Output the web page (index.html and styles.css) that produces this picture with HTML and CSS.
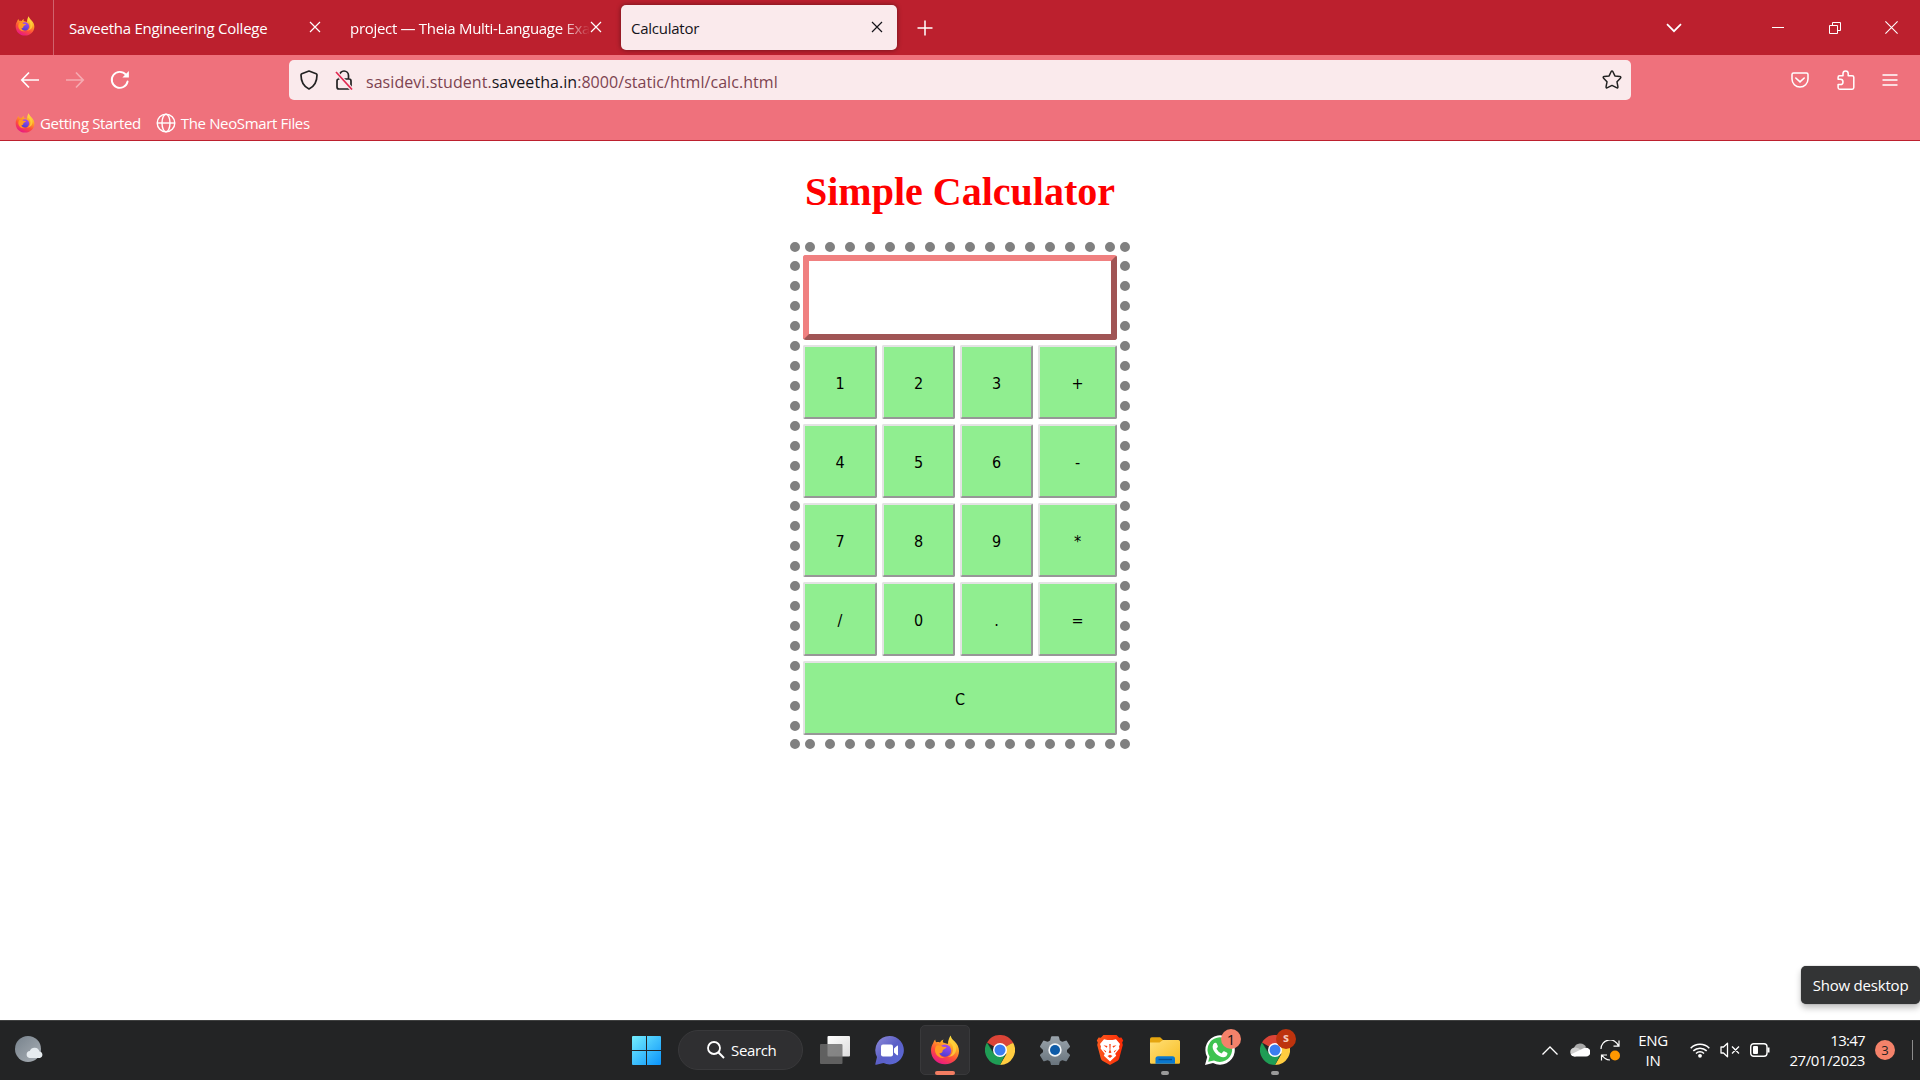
FILE: index.html
```html
<!DOCTYPE html>
<html lang="en">
<head>
<meta charset="utf-8">
<title>Calculator</title>
<link rel="stylesheet" href="styles.css">
</head>
<body>
<svg class="defs" width="0" height="0">
  <defs>
    <linearGradient id="ffBody" x1=".8" y1="0" x2=".3" y2="1"><stop offset="0" stop-color="#fff44f"/><stop offset=".35" stop-color="#ffa824"/><stop offset=".65" stop-color="#ff5038"/><stop offset="1" stop-color="#e6158a"/></linearGradient>
    <linearGradient id="ffGlobe" x1=".7" y1="0" x2=".4" y2="1"><stop offset="0" stop-color="#a84bf0"/><stop offset="1" stop-color="#4b3fd0"/></linearGradient>
    <linearGradient id="win" x1="0" y1="0" x2="1" y2="1"><stop offset="0" stop-color="#74eefe"/><stop offset="1" stop-color="#0a93fb"/></linearGradient>
    <linearGradient id="chat" x1="0" y1="0" x2="1" y2="1"><stop offset="0" stop-color="#8f8bd8"/><stop offset=".5" stop-color="#5b5fc7"/><stop offset="1" stop-color="#5a6ad8"/></linearGradient>
    <linearGradient id="folder" x1="0" y1="0" x2="1" y2="1"><stop offset="0" stop-color="#ffdf77"/><stop offset="1" stop-color="#f8bd22"/></linearGradient>
    <linearGradient id="gear" x1="0" y1="0" x2="0" y2="1"><stop offset="0" stop-color="#98a2aa"/><stop offset="1" stop-color="#69747d"/></linearGradient>
    <linearGradient id="brave" x1="0" y1="0" x2="1" y2="0"><stop offset="0" stop-color="#fb5a1f"/><stop offset="1" stop-color="#fb2a05"/></linearGradient>
    <linearGradient id="moon" x1="0" y1="0" x2="1" y2="1"><stop offset="0" stop-color="#77828c"/><stop offset="1" stop-color="#a9afb5"/></linearGradient>
    <linearGradient id="sheet" x1="0" y1="0" x2="1" y2="1"><stop offset="0" stop-color="#fff"/><stop offset="1" stop-color="#dcdcdc"/></linearGradient>
    <symbol id="firefox" viewBox="0 0 30 30">
      <path fill="url(#ffBody)" d="M3.2 8C3.7 6.400 4.300 5.300 5.200 4.400c.2 1.300.5 2.100 1 2.800 1.300-.3 2.600-.2 3.800.3.800-1.400 2.100-2.400 3.600-2.900-.8 1-.9 2-.5 3l4.700 1.400C18.300 5 19.200 2.200 20.800.4c.2 2.500 1.700 4 3.700 5.800 2.900 2.700 4.500 6.200 4.500 9.800C29 23.400 23 29.300 15 29.300S1 23.300 1 15.600C1 12.700 1.800 10.200 3.200 8z"/>
      <circle cx="15" cy="15.600" r="6.200" fill="url(#ffGlobe)"/>
      <path fill="#ff9a23" d="M6.500 10.500c2.600-.8 5 .2 6.300 1.300l3.700.2c-.3 1.500-2.100 1.900-3.300 2.700-.8.700-.3 2-1.300 2.900-1 .8-2 .8-2.800.4.900 3 3.400 4.600 6 4.600-4.600 1.400-9.100-1.400-10-6-.4-2.200.1-4.500 1.400-6.100z"/>
      <path fill="#ffd23c" d="M18.500 6.500c2.900 1.300 4.900 4.500 4.600 8-.2 3.700-2.500 6.500-5.700 7.500 6-.2 9.200-4 8.800-9.600-.4-3.600-4.600-5.100-5.400-9.900-1 1.200-1.600 2.300-2.300 4z" opacity=".8"/>
    </symbol>
    <symbol id="chrome" viewBox="0 0 30 30">
      <path fill="#db4437" d="M15 15 2 7.500A15 15 0 0 1 28 7.500z"/>
      <path fill="#1f9d55" d="M15 15 15 30A15 15 0 0 1 2 7.500L8.500 18.700z"/>
      <path fill="#ffcd40" d="M15 15 28 7.500A15 15 0 0 1 15 30L21.500 18.700z"/>
      <path fill="#db4437" d="M15 8.200H28.400L26 5H8z"/>
      <path fill="#1f9d55" d="M2 7.500 9 18.500 15 22 20.800 18.600 15 30z"/>
      <circle cx="15" cy="15" r="7" fill="#fff"/><circle cx="15" cy="15" r="5.500" fill="#3b7df0"/>
    </symbol>
    <symbol id="cross" viewBox="0 0 12 12"><path d="M1 1l10 10M11 1L1 11" fill="none" stroke="currentColor" stroke-width="1.200"/></symbol>
  </defs>
</svg>

<header class="browser">
  <div class="tabs">
    <div class="pinned"><svg class="ff-small"><use href="#firefox"/></svg></div>
    <div class="tab tab-a"><span class="label">Saveetha Engineering College</span><svg class="close"><use href="#cross"/></svg></div>
    <div class="tab tab-b"><span class="label fade">project — Theia Multi-Language Exa</span><svg class="close"><use href="#cross"/></svg></div>
    <div class="tab tab-active"><span class="label">Calculator</span><svg class="close"><use href="#cross"/></svg></div>
    <svg class="plus" viewBox="0 0 16 16"><path d="M8 .5v15M.5 8h15" stroke="#fff" stroke-width="1.500"/></svg>
    <div class="window-buttons">
      <svg width="16" height="10" viewBox="0 0 16 10"><path d="M1 1.200l7 7 7-7" fill="none" stroke="#fff" stroke-width="1.700"/></svg>
      <svg width="12" height="12" viewBox="0 0 12 12"><path d="M0 5.500h12" stroke="#fff"/></svg>
      <svg width="12" height="12" viewBox="0 0 12 12"><path d="M.5 3.500h8v8h-8zM3.500 3.500v-3h8v8h-3" fill="none" stroke="#fff"/></svg>
      <svg width="13" height="13" viewBox="0 0 13 13"><path d="M.4.400l12.200 12.200M12.600.4L.4 12.600" stroke="#fff" stroke-width="1.100"/></svg>
    </div>
  </div>
  <div class="nav">
    <div class="nav-buttons">
      <svg width="20" height="18" viewBox="0 0 20 18"><path d="M19 9H2M9 1.500L1.800 9 9 16.500" fill="none" stroke="#fff" stroke-width="1.700"/></svg>
      <svg class="dim" width="20" height="18" viewBox="0 0 20 18"><path d="M1 9h17M11 1.500L18.200 9 11 16.500" fill="none" stroke="#fff" stroke-width="1.700"/></svg>
      <svg width="20" height="20" viewBox="0 0 20 20"><path d="M17.600 11.500a8 8 0 1 1-1.700-6.800" fill="none" stroke="#fff" stroke-width="1.900" stroke-linecap="round"/><path fill="#fff" d="M18.900 1v6.500h-6.500z"/></svg>
    </div>
    <div class="urlbar">
      <svg width="18" height="20" viewBox="0 0 18 20"><path d="M9 1l7.200 2.700q.8.300.8 1.200C17 11.500 14 16.500 9 19 4 16.500 1 11.500 1 4.900q0-.9.800-1.200z" fill="none" stroke="#222" stroke-width="1.700" stroke-linejoin="round"/></svg>
      <svg width="18" height="20" viewBox="0 0 18 20"><path d="M4.500 8V5.500a4.500 4.500 0 0 1 9 0V9M4.500 9H4q-2 0-2 2v6q0 2 2 2h10q2 0 2-2v-6q0-2-2-2H9" fill="none" stroke="#222" stroke-width="1.700"/><path d="M1 2l16 17.500" stroke="#faeaec" stroke-width="4"/><path d="M1 2l16 17.500" stroke="#e22850" stroke-width="1.700"/></svg>
      <span class="url">sasidevi.student.<b>saveetha.in</b>:8000/static/html/calc.html</span>
      <svg class="star" width="20" height="20" viewBox="0 0 20 20"><path d="M9.100 1.700q.9-1.600 1.800 0l2 4.200 4.900.7q1.700.3.600 1.600L15 11.800l.9 4.900q.2 1.800-1.400 1L10 15.400l-4.500 2.300q-1.600.8-1.400-1L5 11.800 1.600 8.200q-1.100-1.300.6-1.600l4.900-.7z" fill="none" stroke="#222" stroke-width="1.500" stroke-linejoin="round"/></svg>
    </div>
    <div class="nav-right">
      <svg width="18" height="16" viewBox="0 0 18 16"><path d="M2.500 1h13q1.500 0 1.500 1.500V7a8 8 0 0 1-16 0V2.500Q1 1 2.500 1z" fill="none" stroke="#fff" stroke-width="1.500"/><path d="M4.800 6L9 9.800 13.200 6" fill="none" stroke="#fff" stroke-width="1.600" stroke-linecap="round"/></svg>
      <svg width="18" height="20" viewBox="0 0 18 20"><path d="M2.500 5.700H6V3.500a2.600 2.600 0 0 1 5.200 0v2.200h4q1.600 0 1.600 1.600v10.300q0 1.600-1.600 1.600H2.700q-1.600 0-1.600-1.600v-3.100h2.300a2.600 2.600 0 0 0 0-5.200H1.100V7.200q0-1.500 1.400-1.500z" fill="none" stroke="#fff" stroke-width="1.500" stroke-linejoin="round"/></svg>
      <svg width="16" height="12" viewBox="0 0 16 12"><path d="M.5 1h15M.5 6h15M.5 11h15" stroke="#fff" stroke-width="1.400"/></svg>
    </div>
  </div>
  <div class="bookmarks">
    <svg class="ff-small"><use href="#firefox"/></svg><span>Getting Started</span>
    <svg class="globe" viewBox="0 0 20 20"><g fill="none" stroke="#fff" stroke-width="1.400"><circle cx="10" cy="10" r="8.800"/><ellipse cx="10" cy="10" rx="4" ry="8.800"/><path d="M1 10h18"/></g></svg><span>The NeoSmart Files</span>
  </div>
</header>

<main class="page">
  <h1>Simple Calculator</h1>
  <div class="calc">
    <svg class="dots" width="340" height="507" viewBox="0 0 340 507"><path d="M5 5v.001M335 5v.001M5 502v.001M335 502v.001M20 5h301M20 502h301M5 24v461M335 24v461"/></svg>
    <div class="screen"></div>
    <div class="keys">
      <button>1</button><button>2</button><button>3</button><button>+</button>
      <button>4</button><button>5</button><button>6</button><button>-</button>
      <button>7</button><button>8</button><button>9</button><button>*</button>
      <button>/</button><button>0</button><button>.</button><button>=</button>
      <button class="wide">C</button>
    </div>
  </div>
  <div class="tooltip">Show desktop</div>
</main>

<footer class="taskbar">
  <svg class="weather" width="30" height="28" viewBox="0 0 30 28"><circle cx="13" cy="13" r="13" fill="url(#moon)"/><path d="M14.500 22a3.600 3.600 0 0 1 .3-7.100 5.200 5.200 0 0 1 9.700.6 3.300 3.300 0 0 1 .3 6.500z" fill="#e6ebef"/></svg>
  <div class="apps">
    <svg width="29" height="29" viewBox="0 0 29 29"><path fill="url(#win)" d="M1 0h13v14H0V1q0-1 1-1zM15 0h13q1 0 1 1v13H15zM0 15h14v14H1q-1 0-1-1zM15 15h14v13q0 1-1 1H15z"/></svg>
    <div class="search"><svg width="18" height="18" viewBox="0 0 18 18"><circle cx="7" cy="7" r="6" fill="none" stroke="#fff" stroke-width="1.800"/><path d="M11.300 11.300l5.700 5.700" stroke="#fff" stroke-width="2"/></svg><span>Search</span></div>
    <svg class="views" width="30" height="28" viewBox="0 0 30 28"><rect x="7.500" width="22.500" height="20.500" rx="1" fill="url(#sheet)"/><rect y="8" width="22.500" height="20" rx="1" fill="#6e6e6e" fill-opacity=".82"/></svg>
    <svg class="chat" width="29" height="29" viewBox="0 0 29 29"><path fill="url(#chat)" d="M14.500 0a14.200 14.200 0 1 1-6 27L1.200 28.800q-1.200.2-.8-1L2 21A14.200 14.200 0 0 1 14.500 0z"/><rect x="6" y="8.500" width="12" height="12" rx="2" fill="#fff"/><path fill="#fff" d="M19 12.500l3-2.700q1-.6 1 .5v8.400q0 1-1 .5l-3-2.700z"/></svg>
    <div class="app active"><svg class="icon"><use href="#firefox"/></svg></div>
    <div class="app"><svg class="icon"><use href="#chrome"/></svg></div>
    <div class="app"><svg class="icon" viewBox="0 0 30 30"><path fill="url(#gear)" stroke="url(#gear)" stroke-width="2" stroke-linejoin="round" d="M12 2.200h6l1 4 3 1.700 4-1.300 3 5-3 2.900v2.900l3 2.900-3 5-4-1.200-3 1.700-1 4h-6l-1-4-3-1.700-4 1.200-3-5 3-2.900v-2.900l-3-2.900 3-5 4 1.300 3-1.700z"/><circle cx="15" cy="15" r="6.700" fill="#f1f5f8"/><circle cx="15" cy="15" r="5" fill="#0d5ba8"/></svg></div>
    <div class="app"><svg class="icon" viewBox="0 0 30 30"><path fill="url(#brave)" d="M8.500 0h13l2.700 2.800 2.200-.3 1.800 3-1 2 .6 2.500-3.600 13.400q-.4 1.500-1.600 2.400L15 30l-7.600-4.200q-1.200-.9-1.600-2.400L2.200 10l.6-2.500-1-2 1.800-3 2.200.3z"/><path fill="#fff" d="M9 4.300l3.500.8h5l3.500-.8 4 4.700-1 2.500.4 2-4.200 5.200 1 2-1.700 1.500L15 26.500l-4.500-4.300L8.800 20.700l1-2L5.600 13.500l.4-2L5 9z"/><path fill="#fb4012" d="M8.500 10.300l4 .7-.8 1.800zM21.500 10.300l-4 .7.800 1.800zM14.300 9h1.400l-.3 6 1 2.500-1.400.7-1.400-.7 1-2.500zM12.500 21l2.500-1.300 2.500 1.300-2.500 2zM8.200 14.500l3 1.700-.6 1.300zM21.800 14.500l-3 1.700.6 1.300z"/></svg></div>
    <div class="app"><svg class="icon" viewBox="0 0 30 30"><path fill="#e5a50f" d="M0 4q0-1.800 1.800-1.800h8.400L13 5v5H0z"/><path fill="url(#folder)" d="M0 7.500h9.500L13 5h15.500Q30 5 30 6.500v21q0 1.200-1.200 1.200H1.200Q0 28.700 0 27.500z"/><path fill="#0a78cf" d="M5.500 28.700v-5q0-2.500 2.500-2.500h14.500q2.500 0 2.500 2.500v5z"/><path d="M8.500 24.500H22" stroke="#064f91" stroke-width="1.400"/></svg><i></i></div>
    <div class="app"><svg class="icon" viewBox="0 0 30 30"><path fill="#fff" d="M0 30l2.200-7.900A14.700 14.700 0 1 1 8 27.900z"/><path fill="#3fc351" d="M3.200 26.800l1.400-5.300A12.300 12.300 0 1 1 9 25.500z"/><path fill="#fff" d="M10.700 7.800q.7 0 1 .7l1.100 2.600q.2.600-.2 1.100l-1.200 1.500q1.600 3.200 5.200 4.700l1.600-1.800q.4-.5 1-.3l2.900 1.400q.5.300.4.900-.4 3.600-4.300 3.600c-4.500-.3-10.500-5.200-10.600-10.500Q7.700 9.300 9.300 8z"/></svg><b class="count">1</b></div>
    <div class="app"><svg class="icon"><use href="#chrome"/></svg><b class="count avatar">s</b><i></i></div>
  </div>
  <div class="tray">
    <svg width="16" height="9" viewBox="0 0 16 9"><path d="M.5 8.500L8 1l7.500 7.500" fill="none" stroke="#fff" stroke-width="1.300"/></svg>
    <svg class="cloud" width="20" height="14" viewBox="0 0 20 14"><path fill="#a9a9a9" d="M4 5a6.500 6.500 0 0 1 12-1l-4 4z"/><path fill="#d0d0d0" d="M5 13.500A4.500 4.500 0 0 1 4.500 4.500Q8 4 11 7l5 3z"/><path fill="#fff" d="M4.500 13.500q-2.500 0-3.800-2L13 5.500a4.500 4.500 0 0 1 3-.8 4.400 4.400 0 0 1 0 8.800z"/></svg>
    <svg class="sync" width="21" height="21" viewBox="0 0 21 21"><path d="M1 9A9 9 0 0 1 18.500 6M19 .5V6.200H13.500M10 20A9 9 0 0 1 2 14.800M1.500 20.500V15H7" fill="none" stroke="#fff" stroke-width="1.200"/><circle cx="15" cy="15.500" r="5" fill="#ff9800"/></svg>
    <div class="lang"><span>ENG</span><span>IN</span></div>
    <svg class="wifi" width="20" height="16" viewBox="0 0 20 16"><g fill="none" stroke="#fff" stroke-width="1.500"><path d="M.7 6.200a13.200 13.200 0 0 1 18.600 0M3.300 8.900a9.500 9.500 0 0 1 13.400 0M6 11.500a5.700 5.700 0 0 1 8 0"/></g><circle cx="10" cy="13.800" r="1.900" fill="#fff"/></svg>
    <svg class="sound" width="20" height="16" viewBox="0 0 20 16"><path d="M1 5h2.500L7.500 1.200v13.600L3.500 11H1zM12 4.500l7 7M19 4.500l-7 7" fill="none" stroke="#fff" stroke-width="1.300" stroke-linejoin="round"/></svg>
    <svg class="battery" width="20" height="14" viewBox="0 0 20 14"><rect x=".7" y=".7" width="16.300" height="12.600" rx="3" fill="none" stroke="#fff" stroke-width="1.400"/><rect x="3" y="3" width="5" height="8" rx="1" fill="#fff"/><path d="M18.500 4.500v5" stroke="#fff" stroke-width="2"/></svg>
    <div class="clock"><span>13:47</span><span>27/01/2023</span></div>
    <b class="notif">3</b>
    <i class="peek"></i>
  </div>
</footer>
</body>
</html>
```
FILE: styles.css
```css
* { box-sizing: border-box; }
body { margin: 0; width: 1920px; height: 1080px; overflow: hidden; display: flex; flex-direction: column; background: #fff; font-family: "Open Sans", "Noto Sans", sans-serif; font-size: 15px; }
svg { display: block; flex: none; }
.defs { position: absolute; }
.ff-small { width: 20px; height: 20px; }

.browser { flex: none; height: 141px; background: #ef717c; border-bottom: 1px solid #bc202e; color: #fff; }
.tabs { height: 55px; background: #bc202e; display: flex; align-items: center; }
.pinned { width: 54px; height: 55px; border-right: 1px solid #d0636d; padding: 16px 0 0 15px; }
.tab { height: 45px; display: flex; align-items: center; padding-top: 1px; }
.label { flex: 1; white-space: nowrap; letter-spacing: -.25px; }
.fade { letter-spacing: -.3px; -webkit-mask-image: linear-gradient(to right, #000 212px, transparent 240px); mask-image: linear-gradient(to right, #000 212px, transparent 240px); }
.close { width: 12px; height: 12px; color: #fff; margin-top: -3px; }
.tab-a { width: 267px; padding-left: 15px; }
.tab-b { width: 281px; padding-left: 29px; }
.tab-active { width: 276px; margin-left: 19px; padding: 1px 14px 0 10px; background: #faeaec; color: #15141a; border-radius: 5px; box-shadow: 0 0 5px rgba(0,0,0,.45); }
.tab-active .close { color: #15141a; }
.plus { width: 16px; height: 16px; margin-left: 20px; }
.window-buttons { margin-left: auto; display: flex; align-items: center; padding-right: 22px; }
.window-buttons svg + svg { margin-left: 44px; }
.window-buttons svg:nth-child(2) { margin-left: 90px; }
.window-buttons svg:nth-child(3) { margin-left: 45px; }

.nav { height: 50px; display: flex; align-items: center; }
.nav-buttons { width: 289px; padding-left: 20px; display: flex; align-items: center; gap: 25px; }
.dim { opacity: .4; }
.urlbar { width: 1342px; height: 40px; background: #faeaec; border-radius: 5px; display: flex; align-items: center; padding: 0 9px 0 11px; }
.urlbar svg + svg { margin-left: 17px; }
.url { margin-left: 13px; font-size: 16px; letter-spacing: .05px; color: #7d4350; padding-top: 3px; }
.url b { font-weight: 400; color: #15141a; }
.urlbar .star { margin-left: auto; }
.nav-right { margin-left: auto; display: flex; align-items: center; padding-right: 22px; }
.nav-right svg + svg { margin-left: 28px; }
.nav-right svg:last-child { margin-left: 27px; }
.bookmarks { height: 35px; display: flex; align-items: center; padding-left: 15px; letter-spacing: -.35px; }
.bookmarks span { margin-left: 5px; }
.globe { width: 20px; height: 20px; margin-left: 15px; }

.page { flex: 1; position: relative; display: flex; flex-direction: column; align-items: center; }
h1 { margin: 28px 0 0; height: 73px; font: bold 40px/46px "Liberation Serif", serif; color: #f00; }
.calc { position: relative; width: 340px; height: 507px; padding: 13px; }
.dots { position: absolute; left: 0; top: 0; fill: none; stroke: #808080; stroke-width: 10px; stroke-linecap: round; stroke-dasharray: 0 20; }
.screen { height: 85px; border: 6px solid; border-color: #f08080 #a05555 #a05555 #f08080; border-radius: 3px; margin-bottom: 5px; }
.keys { display: grid; grid-template-columns: 74px 73px 73px 79px; grid-auto-rows: 74px; gap: 5px; }
.keys button { margin: 0; padding: 2px 0 0; border: 2px solid; border-color: #e3e3e3 #979797 #979797 #e3e3e3; border-radius: 2px; background: #90ee90; color: #000; font: 16px "DejaVu Sans Condensed", "DejaVu Sans", sans-serif; font-stretch: condensed; }
.keys .wide { grid-column: 1 / -1; }
.tooltip { position: absolute; right: 0; bottom: 16px; width: 119px; height: 38px; padding-bottom: 1px; background: #333435; border-radius: 5px; color: #fff; display: flex; align-items: center; justify-content: center; letter-spacing: -.2px; box-shadow: 0 4px 6px rgba(0,0,0,.25), 0 0 1px rgba(0,0,0,.6); }

.taskbar { flex: none; height: 60px; padding-bottom: 1px; background: #232425; border-top: 1px solid #3f4040; color: #fff; display: flex; align-items: center; }
.weather { margin-left: 15px; }
.apps { margin-left: 587px; display: flex; align-items: center; }
.search { width: 125px; height: 40px; margin-left: 17px; border-radius: 20px; background: #2f2f31; border: 1px solid #39393b; display: flex; align-items: center; padding-left: 28px; gap: 6px; letter-spacing: -.35px; }
.views { margin-left: 17px; }
.chat { margin-left: 25px; margin-right: 16px; }
.app { position: relative; width: 50px; height: 50px; margin-right: 5px; display: flex; align-items: center; justify-content: center; }
.icon { width: 30px; height: 30px; }
.active { background: #2f2f31; border: 1px solid #39393b; border-radius: 5px; }
.active::after { content: ""; position: absolute; left: 14px; bottom: -1px; width: 20px; height: 4px; border-radius: 2px; background: #f27d62; }
.app i { position: absolute; left: 21px; bottom: 0; width: 8px; height: 4px; border-radius: 2px; background: #9a9a9a; }
.count { position: absolute; left: 26px; top: 4px; width: 20px; height: 20px; border-radius: 50%; background: #f4826a; color: #111; font-weight: 400; font-size: 15px; line-height: 20px; text-align: center; }
.avatar { background: #bd330d; color: #f3c9bb; font-size: 12px; font-weight: 700; line-height: 18px; }
.tray { margin-left: auto; display: flex; align-items: center; }
.lang { width: 50px; line-height: 20px; letter-spacing: -.3px; display: flex; flex-direction: column; align-items: center; }
.clock { width: 95px; display: flex; flex-direction: column; align-items: flex-end; line-height: 20px; letter-spacing: -.4px; }
.clock span:first-child { letter-spacing: -.7px; }
.cloud { margin-left: 12px; }
.sync { margin: 0 7px 0 10px; }
.wifi { margin-left: 12px; }
.sound, .battery { margin-left: 10px; }
.notif { margin-left: 10px; width: 20px; height: 20px; border-radius: 50%; background: #f4826a; color: #222; font-weight: 400; font-size: 13px; line-height: 20px; text-align: center; }
.peek { width: 1px; height: 20px; margin: 0 7px 0 17px; background: #8c8c8c; }
```
